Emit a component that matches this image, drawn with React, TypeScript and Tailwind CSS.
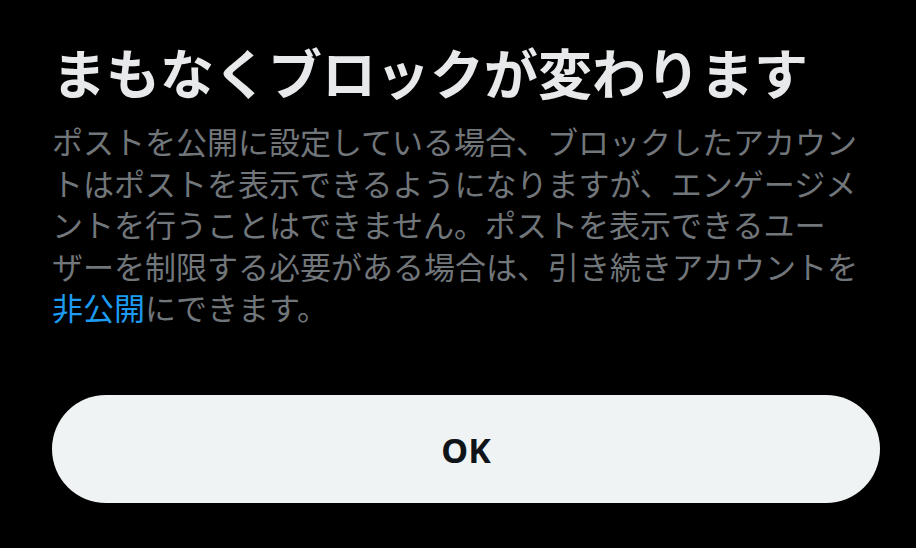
import React from "react";

export default function App() {
  return (
    <div
      lang="ja"
      className="w-[916px] h-[548px] bg-black overflow-hidden pl-[52px] pr-[36px] pt-[40px]"
      style={{ fontFamily: '"Noto Sans CJK JP", "Noto Sans", sans-serif' }}
    >
      <h1 className="text-[54px] leading-[64px] font-bold text-[#e7e9ea] whitespace-nowrap">
        まもなくブロックが変わります
      </h1>
      <p className="mt-[16px] text-[31px] leading-[41.5px] text-[#71767b] [line-break:strict]">
        ポストを公開に設定している場合、ブロックしたアカウントはポストを表示できるようになりますが、エンゲージメントを行うことはできません。ポストを表示できるユー<span className="whitespace-nowrap">ザー</span>を制限する必要がある場合は、引き続きアカウントを
        <span className="text-[#1d9bf0]">非公開</span>
        にできます。
      </p>
      <button
        className="mt-[67px] w-full h-[108px] rounded-full bg-[#eff3f4] text-[#0f1419] text-[34px] font-bold flex items-center justify-center pt-[4px]"
        style={{ fontFamily: '"Noto Sans", "Open Sans", sans-serif' }}
      >
        OK
      </button>
    </div>
  );
}
